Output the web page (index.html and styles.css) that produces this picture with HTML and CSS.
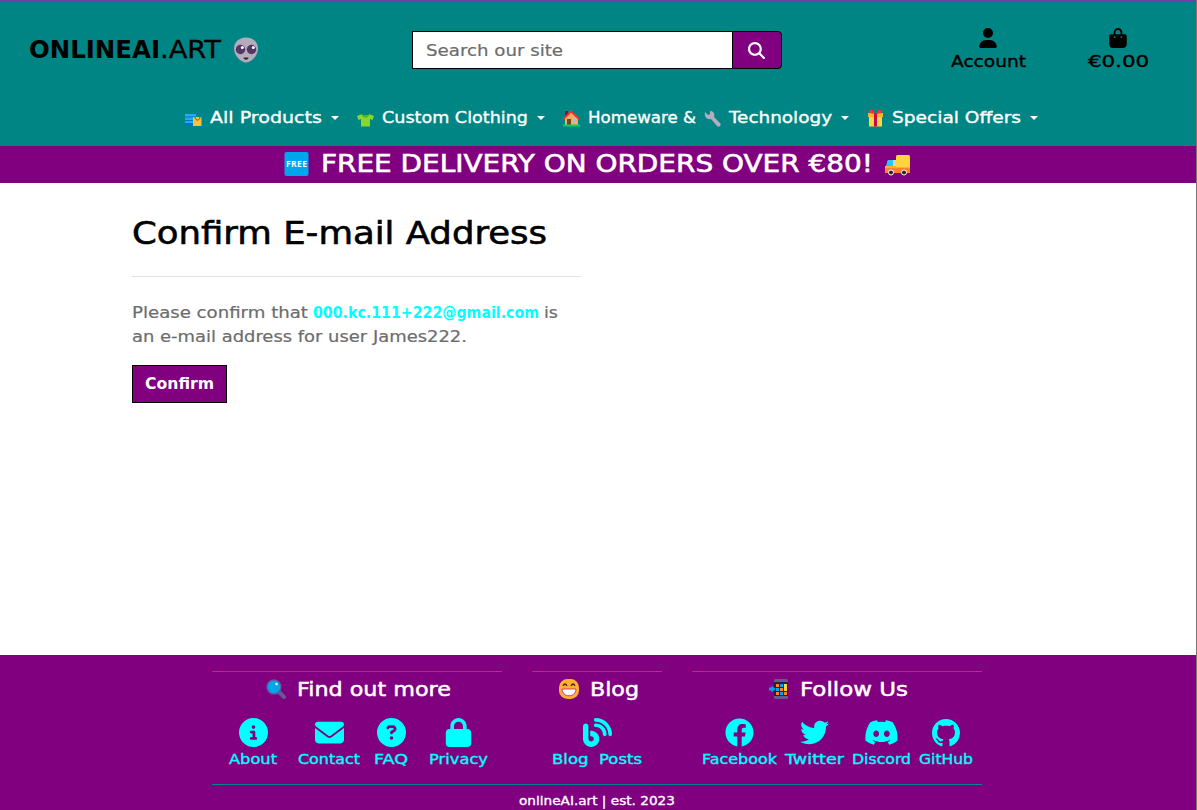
FILE: index.html
```html
<!DOCTYPE html>
<html lang="en">
<head>
<meta charset="utf-8">
<title>onlineAI.art</title>
<link rel="stylesheet" href="styles.css">
</head>
<body>
<div class="page">
<header class="header">
  <div class="topbar">
    <a class="brand"><span class="brand-text"><b class="wide t-online">ONLINEAI</b><span class="wide t-art">.ART</span></span>
      <svg class="alien" viewBox="0 0 26 26"><path d="M13 .5C5.500.5 1 5.500 1 11.500c0 7 7 14 12 14s12-7 12-14c0-6-4.500-11-12-11z" fill="#b4acbc"/><ellipse cx="7.500" cy="12.500" rx="4.700" ry="4.700" fill="#533566"/><ellipse cx="18.500" cy="12.500" rx="4.700" ry="4.700" fill="#533566"/><circle cx="9.300" cy="10.500" r="1.500" fill="#fff"/><circle cx="20.300" cy="10.500" r="1.500" fill="#fff"/><path d="M10.500 20.500h5c0 3-5 3-5 0z" fill="#2b2b2b"/></svg>
    </a>
    <form class="search">
      <div class="search-input"><span class="wide t-search">Search our site</span></div>
      <button class="search-btn" type="button"><svg viewBox="0 0 512 512"><path fill="#fff" d="M416 208c0 45.900-14.900 88.300-40 122.700L502.600 457.400c12.500 12.500 12.500 32.800 0 45.300s-32.800 12.500-45.300 0L330.700 376c-34.400 25.200-76.800 40-122.700 40C93.100 416 0 322.900 0 208S93.100 0 208 0S416 93.100 416 208zM208 352a144 144 0 1 0 0-288 144 144 0 1 0 0 288z"/></svg></button>
    </form>
    <div class="actions">
      <a class="action account"><svg viewBox="0 0 448 512"><path d="M224 256A128 128 0 1 0 224 0a128 128 0 1 0 0 256zm-45.700 48C79.800 304 0 383.800 0 482.300C0 498.700 13.300 512 29.700 512H418.300c16.400 0 29.700-13.300 29.700-29.700C448 383.800 368.200 304 269.700 304H178.300z"/></svg><span class="wide t-account">Account</span></a>
      <a class="action bag"><svg viewBox="0 0 448 512"><path d="M160 112c0-35.300 28.700-64 64-64s64 28.700 64 64v48H160V112zm-48 48H48c-26.500 0-48 21.500-48 48V416c0 53 43 96 96 96H352c53 0 96-43 96-96V208c0-26.500-21.500-48-48-48H336V112C336 50.100 285.900 0 224 0S112 50.100 112 112v48zm24 48a24 24 0 1 1 0 48 24 24 0 1 1 0-48zm152 24a24 24 0 1 1 48 0 24 24 0 1 1 -48 0z"/></svg><span class="wide t-total">€0.00</span></a>
    </div>
  </div>
  <nav class="nav">
    <a class="nav-item">
      <svg class="emoji" viewBox="0 0 17 17"><path d="M0 4h11v12H0z" fill="#0074ba"/><path d="M0 4h11v2.500H0zM0 7.500h11v2.500H0zM0 11h11v2H0z" fill="#26a9f0"/><path d="M8 7h8.500v9H8z" fill="#f9c23c"/><path d="M10 7c0 4 5 4 5 0" fill="none" stroke="#6d4534"/></svg>
      <span class="wide t-products">All Products</span><i class="caret"></i></a>
    <a class="nav-item">
      <svg class="emoji" viewBox="0 0 17 17"><path d="M5 4L0 6l1.500 4L4 9v7.500h9V9l2.500 1L17 6l-5-2c-1 2-6 2-7 0z" fill="#86d72f"/><path d="M5 4c1 4 6 4 7 0" fill="none" stroke="#44911b"/></svg>
      <span class="wide t-clothing">Custom Clothing</span><i class="caret"></i></a>
    <a class="nav-item">
      <svg class="emoji" viewBox="0 0 17 17"><path d="M2 1h3v5H2z" fill="#990838"/><path d="M2 8l6-6 7 6v7H2z" fill="#f3ad61"/><path d="M4 9h4v6H4z" fill="#6d4534"/><path d="M10 8h3v4h-3z" fill="#83cbff"/><path d="M.500 9L8 1.500 16 9" fill="none" stroke="#f8312f" stroke-width="1.800"/><path d="M0 14.500h17v2H0z" fill="#00d26a"/></svg>
      <span class="wide t-home">Homeware &amp;</span>
      <svg class="emoji" viewBox="0 0 17 17"><path d="M1 2l3 3 2-1 0-3c4 0 5 3 4 6l6 6c2 2-1 5-3 3L7 9C3 10 0 7 1 2z" fill="#b4acbc"/></svg>
      <span class="wide t-tech">Technology</span><i class="caret"></i></a>
    <a class="nav-item">
      <svg class="emoji" viewBox="0 0 17 17"><path d="M2 6h13v10.500H2z" fill="#fcd53f"/><path d="M1 3h15v4H1z" fill="#ffb02e"/><path d="M7 3h3v13.500H7z" fill="#ca0b4a"/><path d="M8 4L2 3V0h4zM9 4l6-1V0h-4z" fill="#f8312f"/></svg>
      <span class="wide t-offers">Special Offers</span><i class="caret"></i></a>
  </nav>
</header>
<div class="banner">
  <svg class="free" viewBox="0 0 24 24"><rect width="24" height="24" rx="2" fill="#00a6ed"/><text x="12" y="15.200" text-anchor="middle" font-family="Open Sans, sans-serif" font-size="8.500" font-weight="700" fill="#fff" textLength="21">FREE</text></svg>
  <span class="wide t-banner">FREE DELIVERY ON ORDERS OVER €80!</span>
  <svg class="truck" viewBox="0 0 26 22"><rect x="11" y="1" width="14" height="14" rx="1.500" fill="#fcd53f"/><path d="M3 6h8v8H1z" fill="#d3d3d3"/><path d="M3 6h5v6H1z" fill="#26c9fc"/><path d="M0 12h11v1h14v2H0z" fill="#ffb02e"/><path d="M0 14h25v5H0z" fill="#ff822d"/><g fill="#321b41" stroke="#fff" stroke-width="1"><circle cx="6" cy="18.500" r="2.500"/><circle cx="19" cy="18.500" r="2.500"/></g></svg>
</div>
<main class="main">
  <h1><span class="wide t-title">Confirm E-mail Address</span></h1>
  <hr>
  <p><span class="line"><span class="wide t-please">Please confirm that</span> <a class="wide mail">000.kc.111+222@gmail.com</a> <span class="wide t-is">is</span></span> <span class="line"><span class="wide t-user">an e-mail address for user James222.</span></span></p>
  <button class="confirm" type="button"><span class="wide t-confirm">Confirm</span></button>
</main>
<footer class="footer">
  <div class="cols">
    <section class="col">
      <h2><svg viewBox="0 0 20 20"><path d="M13 13l5 5" stroke="#635994" stroke-width="4" stroke-linecap="round"/><circle cx="8" cy="8" r="7" fill="#00a6ed" stroke="#635994" stroke-width="1.300"/><circle cx="10.500" cy="5" r="1.200" fill="#fff"/></svg><span class="wide t-find">Find out more</span></h2>
      <div class="links">
        <a class="about"><svg viewBox="0 0 512 512"><path d="M256 512A256 256 0 1 0 256 0a256 256 0 1 0 0 512zM216 336h24V272H216c-13.300 0-24-10.700-24-24s10.700-24 24-24h48c13.300 0 24 10.700 24 24v88h8c13.300 0 24 10.700 24 24s-10.700 24-24 24H216c-13.300 0-24-10.700-24-24s10.700-24 24-24zm40-208a32 32 0 1 1 0 64 32 32 0 1 1 0-64z"/></svg><span class="wide t-about">About</span></a>
        <a class="contact"><svg viewBox="0 0 512 512"><path d="M48 64C21.500 64 0 85.500 0 112c0 15.100 7.100 29.300 19.200 38.400L236.800 313.600c11.400 8.500 27 8.500 38.400 0L492.800 150.400c12.100-9.100 19.200-23.300 19.200-38.400c0-26.500-21.500-48-48-48H48zM0 176V384c0 35.300 28.700 64 64 64H448c35.300 0 64-28.700 64-64V176L294.400 339.200c-22.800 17.100-54 17.100-76.800 0L0 176z"/></svg><span class="wide t-contact">Contact</span></a>
        <a class="faq"><svg viewBox="0 0 512 512"><path d="M256 512A256 256 0 1 0 256 0a256 256 0 1 0 0 512zM169.800 165.300c7.900-22.300 29.100-37.300 52.800-37.300h58.300c34.900 0 63.100 28.300 63.100 63.100c0 22.600-12.100 43.500-31.700 54.800L280 264.400c-.2 13-10.900 23.600-24 23.600c-13.300 0-24-10.700-24-24V250.500c0-8.600 4.600-16.500 12.100-20.800l44.300-25.400c4.700-2.700 7.600-7.700 7.600-13.100c0-8.400-6.800-15.100-15.100-15.100H222.600c-3.400 0-6.400 2.100-7.500 5.300l-.4 1.200c-4.400 12.500-18.200 19-30.600 14.600s-19-18.200-14.600-30.600l.4-1.200zM224 352a32 32 0 1 1 64 0 32 32 0 1 1 -64 0z"/></svg><span class="wide t-faq">FAQ</span></a>
        <a class="privacy"><svg viewBox="0 0 448 512"><path d="M144 144v48H304V144c0-44.200-35.800-80-80-80s-80 35.800-80 80zM80 192V144C80 64.500 144.500 0 224 0s144 64.500 144 144v48h16c35.300 0 64 28.700 64 64V448c0 35.300-28.700 64-64 64H64c-35.300 0-64-28.700-64-64V256c0-35.300 28.700-64 64-64H80z"/></svg><span class="wide t-privacy">Privacy</span></a>
      </div>
    </section>
    <section class="col">
      <h2><svg viewBox="0 0 20 20"><rect width="20" height="20" rx="8.500" fill="#ffb02e"/><path d="M4 7q2-4 4 0M12 7q2-4 4 0" fill="none" stroke="#402a32" stroke-width="1.300"/><path d="M3 10h14c0 9-14 9-14 0z" fill="#fff" stroke="#bb1d80" stroke-width=".8"/></svg><span class="wide t-blog">Blog</span></h2>
      <div class="links">
        <a class="posts"><svg viewBox="0 0 512 512"><path d="M192 32c0 17.700 14.300 32 32 32c123.700 0 224 100.300 224 224c0 17.700 14.300 32 32 32s32-14.300 32-32C512 128.900 383.100 0 224 0c-17.700 0-32 14.300-32 32zm0 96c0 17.700 14.300 32 32 32c70.700 0 128 57.300 128 128c0 17.700 14.300 32 32 32s32-14.300 32-32c0-106-86-192-192-192c-17.700 0-32 14.300-32 32zM96 144c0-26.500-21.500-48-48-48S0 117.500 0 144V368c0 79.500 64.500 144 144 144s144-64.500 144-144s-64.500-144-144-144H128v96h16c26.500 0 48 21.500 48 48s-21.500 48-48 48s-48-21.500-48-48V144z"/></svg><span class="wide t-posts">Blog&nbsp; Posts</span></a>
      </div>
    </section>
    <section class="col">
      <h2><svg viewBox="0 0 20 20"><rect x="5" width="14" height="20" rx="1.500" fill="#635994"/><path d="M5 3h14v14H5z" fill="#321b41"/><path d="M7 5h3v3H7zM15 13h3v3h-3zM11 9h3v3h-3z" fill="#ff822d"/><path d="M11 5h3v3h-3zM7 9h3v3H7zM11 13h3v3h-3z" fill="#00a6ed"/><path d="M15 5h3v7h-3z" fill="#fcd53f"/><path d="M7 13h3v3H7z" fill="#ff822d"/><path d="M0 8.500h2.500V6.500l4 3.500-4 3.500v-2H0z" fill="#00a6ed"/></svg><span class="wide t-follow">Follow Us</span></h2>
      <div class="links">
        <a class="facebook"><svg viewBox="0 0 512 512"><path d="M504 256C504 119 393 8 256 8S8 119 8 256c0 123.780 90.690 226.380 209.250 245V327.690h-63V256h63v-54.640c0-62.150 37-96.480 93.670-96.480 27.140 0 55.520 4.840 55.520 4.840v61h-31.280c-30.800 0-40.410 19.120-40.410 38.730V256h68.780l-11 71.690h-57.780V501C413.310 482.380 504 379.780 504 256z"/></svg><span class="wide t-facebook">Facebook</span></a>
        <a class="twitter"><svg viewBox="0 0 512 512"><path d="M459.370 151.716c.325 4.548.325 9.097.325 13.645 0 138.720-105.583 298.558-298.558 298.558-59.452 0-114.680-17.219-161.137-47.106 8.447.974 16.568 1.299 25.340 1.299 49.055 0 94.213-16.568 130.274-44.832-46.132-.975-84.792-31.188-98.112-72.772 6.498.974 12.995 1.624 19.818 1.624 9.421 0 18.843-1.300 27.614-3.573-48.081-9.747-84.143-51.980-84.143-102.985v-1.299c13.969 7.797 30.214 12.670 47.431 13.319-28.264-18.843-46.781-51.005-46.781-87.391 0-19.492 5.197-37.360 14.294-52.954 51.655 63.675 129.300 105.258 216.365 109.807-1.624-7.797-2.599-15.918-2.599-24.040 0-57.828 46.782-104.934 104.934-104.934 30.213 0 57.502 12.670 76.670 33.137 23.715-4.548 46.456-13.320 66.599-25.340-7.798 24.366-24.366 44.833-46.132 57.827 21.117-2.273 41.584-8.122 60.426-16.243-14.292 20.791-32.161 39.308-52.628 54.253z"/></svg><span class="wide t-twitter">Twitter</span></a>
        <a class="discord"><svg viewBox="0 0 640 512"><path d="M524.531 69.836a1.500 1.500 0 0 0-.764-.7A485.065 485.065 0 0 0 404.081 32.030a1.816 1.816 0 0 0-1.923.91 337.461 337.461 0 0 0-14.900 30.600 447.848 447.848 0 0 0-134.426 0 309.541 309.541 0 0 0-15.135-30.600 1.890 1.890 0 0 0-1.924-.91A483.689 483.689 0 0 0 116.085 69.137a1.712 1.712 0 0 0-.788.676C39.068 183.651 18.186 294.690 28.430 404.354a2.016 2.016 0 0 0 .765 1.375A487.666 487.666 0 0 0 176.020 479.918a1.900 1.900 0 0 0 2.063-.676A348.200 348.200 0 0 0 208.120 430.400a1.860 1.860 0 0 0-1.019-2.588 321.173 321.173 0 0 1-45.868-21.853 1.885 1.885 0 0 1-.185-3.126c3.082-2.309 6.166-4.711 9.109-7.137a1.819 1.819 0 0 1 1.900-.256c96.229 43.917 200.410 43.917 295.500 0a1.812 1.812 0 0 1 1.924.233c2.944 2.426 6.027 4.851 9.132 7.160a1.884 1.884 0 0 1-.162 3.126 301.407 301.407 0 0 1-45.890 21.830 1.875 1.875 0 0 0-1 2.611 391.055 391.055 0 0 0 30.014 48.815 1.864 1.864 0 0 0 2.063.7A486.048 486.048 0 0 0 610.700 405.729a1.882 1.882 0 0 0 .765-1.352C623.729 277.594 590.933 167.465 524.531 69.836ZM222.491 337.580c-28.972 0-52.844-26.587-52.844-59.239S193.056 219.100 222.491 219.100c29.665 0 53.306 26.820 52.843 59.239C275.334 310.993 251.924 337.580 222.491 337.580Zm195.380 0c-28.971 0-52.843-26.587-52.843-59.239S388.437 219.100 417.871 219.100c29.667 0 53.307 26.820 52.844 59.239C470.715 310.993 447.538 337.580 417.871 337.580Z"/></svg><span class="wide t-discord">Discord</span></a>
        <a class="github"><svg viewBox="0 0 16 16"><path d="M8 0C3.580 0 0 3.580 0 8c0 3.540 2.290 6.530 5.470 7.590.4.070.55-.17.55-.38 0-.19-.01-.82-.01-1.490-2.010.37-2.530-.49-2.690-.94-.09-.23-.48-.94-.82-1.130-.28-.15-.68-.52-.01-.53.63-.01 1.080.58 1.230.82.72 1.210 1.870.87 2.330.66.070-.52.28-.87.51-1.070-1.780-.2-3.640-.89-3.640-3.950 0-.87.31-1.590.82-2.150-.08-.2-.36-1.020.08-2.120 0 0 .67-.21 2.200.82.64-.18 1.320-.27 2-.27s1.360.09 2 .27c1.530-1.040 2.200-.82 2.200-.82.44 1.100.16 1.920.08 2.120.51.56.82 1.270.82 2.150 0 3.070-1.870 3.750-3.650 3.950.29.25.54.73.54 1.480 0 1.070-.01 1.930-.01 2.200 0 .21.15.46.55.38A8.010 8.010 0 0 0 16 8c0-4.420-3.580-8-8-8z"/></svg><span class="wide t-github">GitHub</span></a>
      </div>
    </section>
  </div>
  <div class="copyright"><span class="wide t-copy">onlineAI.art | est. 2023</span></div>
</footer>
</div>
</body>
</html>
```
FILE: styles.css
```css
* { box-sizing: border-box; }
body { margin: 0; font: 16px/24px "DejaVu Sans", sans-serif; color: #000; background: #fff; }
.page { width: 1197px; height: 810px; overflow: hidden; display: flex; flex-direction: column; border-right: 1px solid #777; }
svg { display: block; flex: none; }

/* Extended lettering: --w is the natural text width, --t the stretched one */
.wide {
  display: inline-block;
  flex: none;
  white-space: nowrap;
  width: calc(var(--w) * 1px);
  margin-right: calc((var(--t) - var(--w)) * 1px);
  transform: scaleX(calc(var(--t) / var(--w)));
  transform-origin: left center;
  -webkit-text-stroke: var(--stroke, .35px) currentColor;
}
.t-online { --w: 128.7; --t: 131; --stroke: 0; }
.t-art { --w: 53.6; --t: 61; }
.t-search { --w: 120.5; --t: 137; --stroke: .2px; }
.t-account { --w: 64.6; --t: 75; }
.t-total { --w: 45.8; --t: 61; }
.t-products { --w: 94; --t: 112; }
.t-clothing { --w: 133; --t: 146; }
.t-home { --w: 103.8; --t: 108; }
.t-tech { --w: 89.6; --t: 103; }
.t-offers { --w: 111.1; --t: 129; }
.t-banner { --w: 474.6; --t: 552; --stroke: .6px; }
.t-title { --w: 374.2; --t: 415; --stroke: .6px; }
.t-please { --w: 155.3; --t: 176; --stroke: .2px; }
.mail { --w: 255; --t: 226; --stroke: 0; color: #0ff; font-weight: 700; }
.t-is { --w: 12.8; --t: 14; --stroke: .2px; }
.t-user { --w: 299; --t: 335; --stroke: .2px; }
.t-confirm { --w: 70.5; --t: 69; --stroke: 0; }
.t-find { --w: 138.3; --t: 154; --stroke: .5px; }
.t-blog { --w: 44.2; --t: 49; --stroke: .5px; }
.t-follow { --w: 94.2; --t: 108; --stroke: .5px; }
.t-about { --w: 41.4; --t: 48; }
.t-contact { --w: 54.5; --t: 62; }
.t-faq { --w: 27.1; --t: 34; }
.t-privacy { --w: 50.7; --t: 59; }
.t-posts { --w: 76.4; --t: 90; }
.t-facebook { --w: 65.8; --t: 75; }
.t-twitter { --w: 46.9; --t: 59; }
.t-discord { --w: 52.6; --t: 59; }
.t-github { --w: 48.5; --t: 54; }
.t-copy { --w: 146.5; --t: 156; }

.header { height: 146px; background: #008585; border-top: 2px solid #743fa5; }
.topbar { display: grid; grid-template-columns: 412px 370px 1fr; height: 96px; align-items: center; }
.brand { display: flex; align-items: center; gap: 12px; padding-left: 29px; font-size: 24px; }
.brand-text { display: flex; width: 192px; }
.alien { width: 26px; height: 26px; }
.search { display: flex; height: 38px; }
.search-input { width: 320px; border: 1px solid #000; border-right: 0; background: #fff; color: #6c6c6c; padding: 7px 0 5px 13px; }
.search-btn { width: 50px; border: 1px solid #000; border-radius: 0 4px 4px 0; background: #800080; padding: 0 0 0 15px; }
.search-btn svg { width: 17px; height: 17px; }
.actions { display: flex; justify-content: flex-end; gap: 62px; padding: 1px 47px 0 0; }
.action { display: flex; flex-direction: column; align-items: center; gap: 2px; }
.action svg { width: 18px; height: 20px; margin-right: 1px; }
.account { width: 75px; }
.bag { width: 61px; }
.nav { display: flex; gap: 18px; padding: 8px 0 0 185px; color: #fff; }
.nav-item { display: flex; align-items: center; gap: 8px; }
.emoji { width: 17px; height: 17px; }
.caret { width: 8px; border: 4px solid transparent; border-top-color: #fff; border-bottom: 0; margin-left: 1px; }
.banner { height: 37px; background: #800080; color: #fff; font-size: 24px; display: flex; align-items: center; gap: 12px; padding: 0 0 2px 284px; }
.free { width: 25px; height: 24px; margin-top: 1px; }
.truck { width: 26px; height: 22px; margin-top: 2px; }
.main { flex: 1; padding: 31px 0 0 132px; }
h1 { margin: 0; font-size: 32px; line-height: 38px; font-weight: 400; }
hr { width: 449px; height: 1px; border: 0; background: #e3e3e3; margin: 24px 0; }
p { margin: 0 0 16px; color: #6c6c6c; }
.line { display: flex; gap: 5px; }
.confirm { display: block; width: 95px; height: 38px; border: 1px solid #000; background: #800080; color: #fff; font: 700 16px "DejaVu Sans", sans-serif; padding: 0 0 2px 12px; text-align: left; }
.footer { height: 155px; background: #800080; color: #fff; padding: 16px 0 0 212px; }
.cols { display: grid; grid-template-columns: 290px 130px 290px; gap: 30px; width: 770px; height: 113px; }
.col { border-top: 1px solid #008585; }
h2 { margin: 5px 0 17px; padding-left: 3px; font-size: 20px; line-height: 24px; font-weight: 400; display: flex; align-items: center; justify-content: center; gap: 11px; }
h2 svg { width: 20px; height: 20px; }
.links { display: flex; font-size: 14px; line-height: 22px; color: #0ff; fill: #0ff; }
.links a { display: flex; flex-direction: column; align-items: center; }
.links svg { width: 29px; height: 29px; margin-bottom: 1px; }
.about { width: 48px; margin-left: 17px; }
.contact { width: 62px; margin-left: 21px; }
.faq { width: 34px; margin-left: 14px; }
.privacy { width: 59px; margin-left: 21px; }
.posts { width: 90px; margin-left: 20px; }
.facebook { width: 75px; margin-left: 10px; }
.twitter { width: 59px; margin-left: 8px; }
.discord { width: 59px; margin-left: 8px; }
.github { width: 54px; margin-left: 8px; }
.links .discord svg { width: 35px; }
.links .github svg { width: 28px; padding-top: 1px; }
.copyright { width: 770px; border-top: 1px solid #008585; font-size: 12.8px; line-height: 32px; padding-left: 307px; }
```
